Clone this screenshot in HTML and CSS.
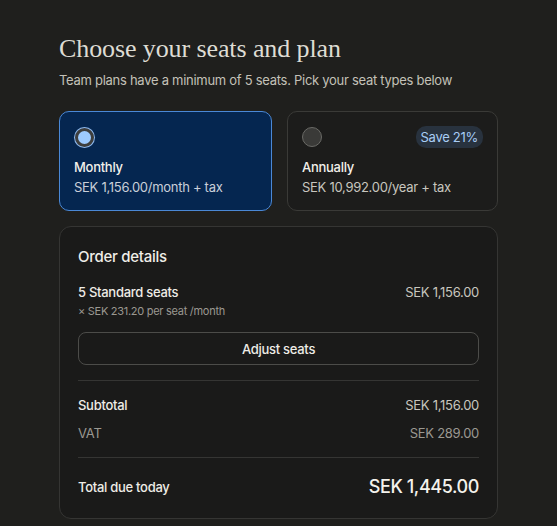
FILE: index.html
```html
<!DOCTYPE html>
<html lang="en">
<head>
<meta charset="utf-8">
<title>Choose your seats and plan</title>
<link rel="stylesheet" href="styles.css">
</head>
<body>
<main class="page">
  <h1 class="title">Choose your seats and plan</h1>
  <p class="subtitle">Team plans have a minimum of 5 seats. Pick your seat types below</p>

  <div class="plans">
    <label class="plan plan--selected">
      <div class="plan-top">
        <span class="radio radio--on"></span>
      </div>
      <div class="plan-name">Monthly</div>
      <div class="plan-price">SEK 1,156.00/month + tax</div>
    </label>
    <label class="plan">
      <div class="plan-top">
        <span class="radio"></span>
        <span class="badge">Save 21%</span>
      </div>
      <div class="plan-name">Annually</div>
      <div class="plan-price">SEK 10,992.00/year + tax</div>
    </label>
  </div>

  <section class="order">
    <h2 class="order-title">Order details</h2>
    <div class="line">
      <div>
        <div class="line-label">5 Standard seats</div>
        <div class="line-note">× SEK 231.20 per seat /month</div>
      </div>
      <div class="line-value">SEK 1,156.00</div>
    </div>
    <button class="adjust" type="button">Adjust seats</button>
    <hr class="divider">
    <div class="sum">
      <span class="sum-label">Subtotal</span>
      <span class="sum-value">SEK 1,156.00</span>
    </div>
    <div class="sum sum--muted">
      <span class="sum-label">VAT</span>
      <span class="sum-value">SEK 289.00</span>
    </div>
    <hr class="divider">
    <div class="total">
      <span class="total-label">Total due today</span>
      <span class="total-value">SEK 1,445.00</span>
    </div>
  </section>
</main>
</body>
</html>
```

FILE: styles.css
```css
* { box-sizing: border-box; }

html, body {
  margin: 0;
  background: #1f1f1d;
}

body {
  font-family: "Inter", "Noto Sans", sans-serif;
  letter-spacing: -0.28px;
  color: #e8e6df;
}

.page {
  width: 439px;
  margin-left: 59px;
  padding-top: 33px;
}

.title {
  margin: 0;
  font-family: "Liberation Serif", "DejaVu Serif", serif;
  font-weight: 400;
  font-size: 26px;
  line-height: 32px;
  color: #dedcd4;
  letter-spacing: -0.1px;
}

.subtitle {
  margin: 6px 0 0 0;
  font-size: 13px;
  line-height: 18px;
  color: #c3c1b8;
}

.plans {
  display: grid;
  grid-template-columns: 213px 211px;
  column-gap: 15px;
  margin-top: 22px;
}

.plan {
  display: block;
  height: 100px;
  padding: 14px 14px 0 14px;
  border: 1px solid #3a3a37;
  border-radius: 10px;
  background: #1c1c1b;
}

.plan--selected {
  background: #052650;
  border-color: #4a88d6;
}

.plan-top {
  display: flex;
  align-items: center;
  justify-content: space-between;
  height: 22px;
}

.radio {
  width: 20px;
  height: 20px;
  border-radius: 50%;
  border: 1px solid #6a6a66;
  background: #3a3a38;
}

.radio--on {
  margin-left: 1px;
  width: 19px;
  height: 19px;
  border: 3px solid #3e3e3d;
  background: #9ecbff;
  box-shadow: 0 0 0 1px #8fb9ee;
}

.badge {
  padding: 2px 5px;
  border-radius: 10px;
  background: #28323e;
  color: #a9cdf5;
  font-size: 13px;
  line-height: 18px;
}

.plan-name {
  margin-top: 10px;
  font-size: 13px;
  font-weight: 500;
  line-height: 18px;
  color: #f2f0ea;
}

.plan-price {
  margin-top: 2px;
  font-size: 13px;
  line-height: 18px;
  color: #c8c6bf;
}

.plan--selected .plan-price { color: #c9cfd9; }

.order {
  margin-top: 15px;
  padding: 19px 18px 21px 18px;
  border: 1px solid #353533;
  border-radius: 12px;
  background: #1a1a19;
}

.order-title {
  margin: 0;
  font-size: 15px;
  font-weight: 500;
  line-height: 22px;
  color: #f0eee8;
}

.line {
  display: flex;
  justify-content: space-between;
  margin-top: 16px;
}

.line-label {
  font-size: 13px;
  font-weight: 500;
  line-height: 17px;
  color: #eeece6;
}

.line-note {
  margin-top: 3px;
  font-size: 11px;
  line-height: 15px;
  color: #9a9891;
}

.line-value {
  font-size: 13px;
  line-height: 17px;
  color: #c8c6bf;
}

.adjust {
  display: block;
  width: 100%;
  height: 33px;
  margin-top: 13px;
  border: 1px solid #4c4c49;
  border-radius: 8px;
  background: transparent;
  font-family: inherit;
  letter-spacing: inherit;
  font-size: 13px;
  font-weight: 500;
  color: #eeece6;
}

.divider {
  margin: 15px 0 0 0;
  border: 0;
  border-top: 1px solid #353533;
}

.sum {
  display: flex;
  justify-content: space-between;
  font-size: 13px;
  line-height: 18px;
  margin-top: 15px;
}

.sum + .sum { margin-top: 10px; }

.sum-label { font-weight: 500; color: #eeece6; }
.sum-value { color: #c8c6bf; }

.sum--muted .sum-label { font-weight: 400; color: #9a9891; }
.sum--muted .sum-value { color: #9a9891; }

.sum--muted + .divider { margin-top: 15px; }

.total {
  display: flex;
  justify-content: space-between;
  align-items: center;
  margin-top: 18px;
}

.total-label {
  font-size: 13px;
  font-weight: 500;
  color: #eeece6;
}

.total-value {
  font-size: 18px;
  font-weight: 500;
  letter-spacing: -0.4px;
  color: #f4f2ec;
}
```
